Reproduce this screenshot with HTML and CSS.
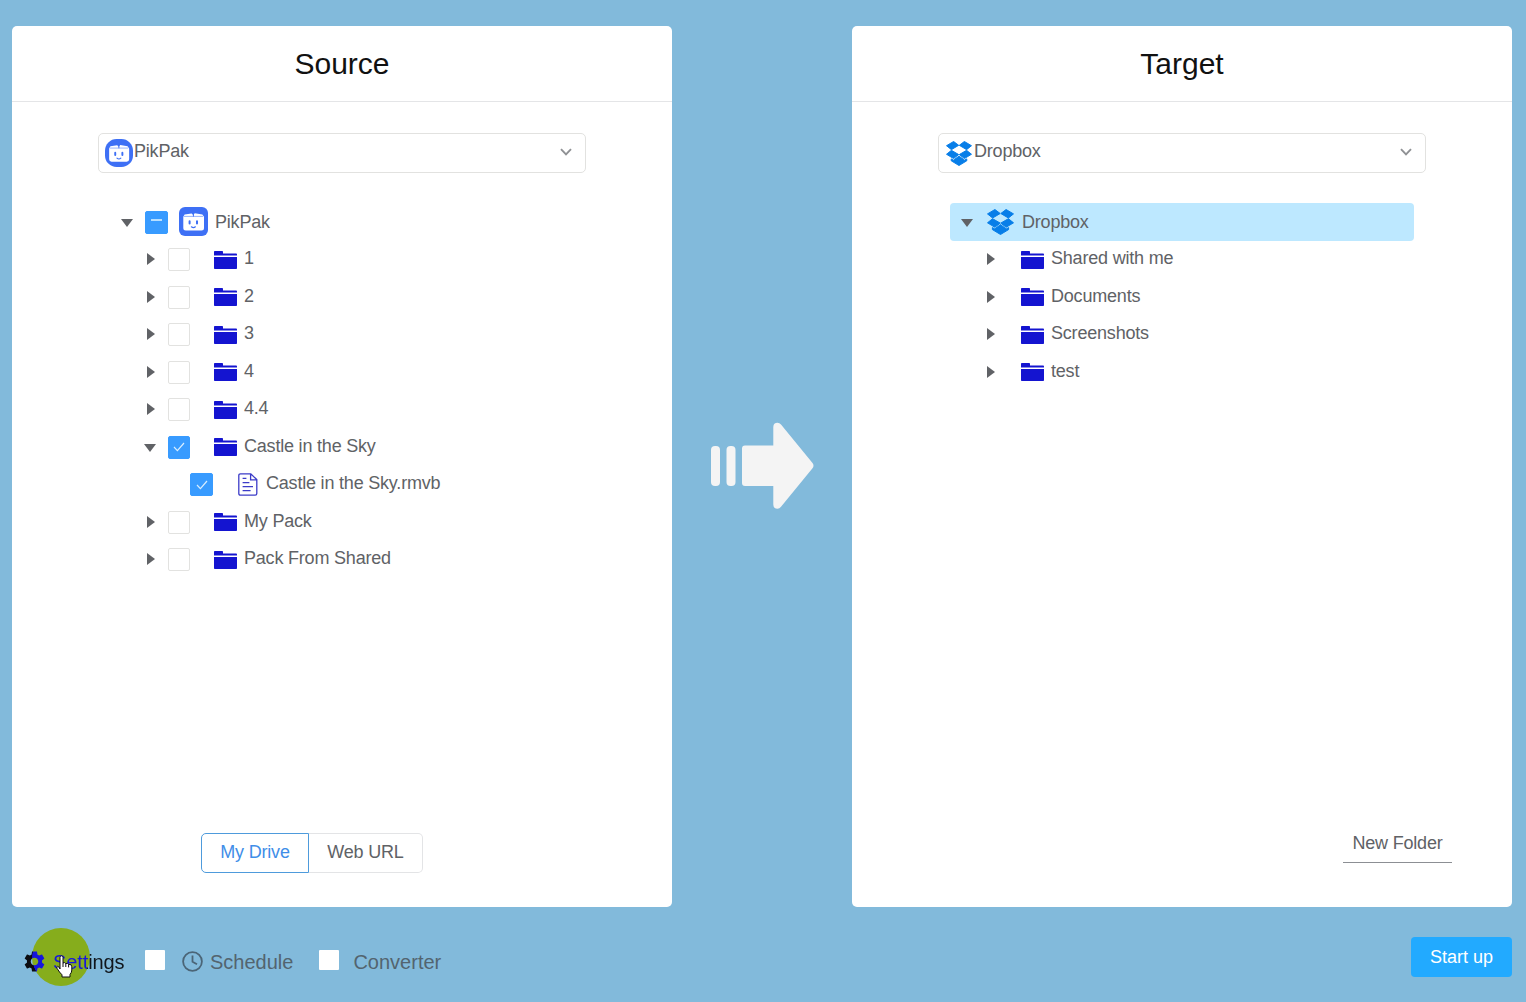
FILE: index.html
```
<!DOCTYPE html>
<html lang="en">
<head>
    <meta charset="UTF-8">
    <meta name="viewport" content="width=device-width, initial-scale=1.0">
    <title>Cloud Transfer</title>
    <link rel="stylesheet" href="styles.css">
</head>
<body>
    <svg class="sprite" width="0" height="0">
        <symbol id="folder" viewBox="0 0 23 18">
            <path d="M0 .8Q0 0 .8 0H8.2Q9 0 9 .8V2.6H22.2Q23 2.6 23 3.4V4.6H0ZM0 6H23V17.2Q23 18 22.2 18H.8Q0 18 0 17.2Z"/>
        </symbol>
        <symbol id="pikpak-face" viewBox="0 0 29 29">
            <path fill="#fff" d="M5.6 7.6 12.6 6.4 14.2 8 15.8 6.2 23.4 7.6 25 9.8V21Q25 23.5 22.5 23.5H6.8Q4.3 23.5 4.3 21V9.8Z"/>
            <path fill="none" stroke="#7d9ffa" stroke-width=".8" d="M5 9.4H24"/>
            <path fill="none" stroke="#3e70f5" stroke-width="1" d="M14.4 5.5V9.6"/>
            <path fill="none" stroke="#3e70f5" stroke-width="2" stroke-linecap="round" d="M10.6 14.2V16.6M18 14.2V16.6"/>
            <path fill="none" stroke="#3e70f5" stroke-width="1.2" stroke-linecap="round" d="M12.4 19.8Q14.4 21.6 16.4 19.8"/>
        </symbol>
        <symbol id="dropbox" viewBox="0 0 27 26">
            <path stroke="#087ee8" stroke-width="1" stroke-linejoin="round" d="M7.9 .5 13.2 4.5 5.6 9 .5 4.9ZM19.1 .5 13.8 4.5 21.4 9 26.5 4.9ZM.5 13.8 5.6 9.7 13.2 14.1 7.9 18.3ZM26.5 13.8 21.4 9.7 13.8 14.1 19.1 18.3ZM13.5 15.6 19.2 19.9 21.6 18.6V20.6L13.5 25.5 5.4 20.6V18.6L7.8 19.9Z"/>
        </symbol>
        <symbol id="chevron" viewBox="0 0 12 8">
            <path fill="none" stroke="#8f9194" stroke-width="1.9" d="M1 1.2 6 6.4 11 1.2"/>
        </symbol>
        <symbol id="check" viewBox="0 0 12 10">
            <path fill="none" stroke="#d9eeff" stroke-width="1.2" d="M1 5 4.4 8.6 11 1"/>
        </symbol>
        <radialGradient id="gear-fill" gradientUnits="userSpaceOnUse" cx="37.2" cy="7.7" r="27.6">
            <stop offset=".98" stop-color="#1616dc"/>
            <stop offset="1" stop-color="#0c0c10"/>
        </radialGradient>
    </svg>

    <main class="transfer">
        <section class="panel">
            <h1>Source</h1>
            <div class="select">
                <svg class="select-icon" viewBox="0 0 29 29"><rect width="29" height="29" rx="12" fill="#3e70f5"/><use href="#pikpak-face"/></svg>
                <span>PikPak</span>
                <svg class="chevron"><use href="#chevron"/></svg>
            </div>
            <ul class="tree">
                <li class="root"><i class="caret open"></i><i class="box partial"></i><svg class="logo" viewBox="0 0 29 29"><rect width="29" height="29" rx="6" fill="#3e70f5"/><use href="#pikpak-face"/></svg><span>PikPak</span></li>
                <li class="child"><i class="caret"></i><i class="box"></i><svg class="folder"><use href="#folder"/></svg><span>1</span></li>
                <li class="child"><i class="caret"></i><i class="box"></i><svg class="folder"><use href="#folder"/></svg><span>2</span></li>
                <li class="child"><i class="caret"></i><i class="box"></i><svg class="folder"><use href="#folder"/></svg><span>3</span></li>
                <li class="child"><i class="caret"></i><i class="box"></i><svg class="folder"><use href="#folder"/></svg><span>4</span></li>
                <li class="child"><i class="caret"></i><i class="box"></i><svg class="folder"><use href="#folder"/></svg><span>4.4</span></li>
                <li class="child"><i class="caret open"></i><i class="box checked"><svg><use href="#check"/></svg></i><svg class="folder"><use href="#folder"/></svg><span>Castle in the Sky</span></li>
                <li class="file-row"><i class="box checked"><svg><use href="#check"/></svg></i><svg class="file" viewBox="0 0 20 23"><path d="M2.4 .8H12.8L18.8 6.6V20.6Q18.8 22.2 17.2 22.2H2.4Q.8 22.2 .8 20.6V2.4Q.8 .8 2.4 .8ZM12.6 1V6.8H18.6M4.6 5.4H8.4M4.6 9.6H11.4M4.6 13.6H15M4.6 17.6H12.6"/></svg><span>Castle in the Sky.rmvb</span></li>
                <li class="child"><i class="caret"></i><i class="box"></i><svg class="folder"><use href="#folder"/></svg><span>My Pack</span></li>
                <li class="child"><i class="caret"></i><i class="box"></i><svg class="folder"><use href="#folder"/></svg><span>Pack From Shared</span></li>
            </ul>
            <div class="tabs">
                <button class="tab active">My Drive</button>
                <button class="tab">Web URL</button>
            </div>
        </section>

        <svg class="arrow" viewBox="0 0 104 88">
            <rect x="1" y="24" width="9" height="40" rx="4"/>
            <rect x="16.5" y="24" width="9" height="40" rx="4"/>
            <path d="M35 23.5H63.3V5Q63.5 .8 67.5 .8 69.5 .8 71 2.6L102.5 41Q104.5 43.7 102.5 46.3L71 84.8Q69.5 86.8 67.5 86.8 63.5 86.8 63.3 82.5V64H35Q32 64 32 61V26.5Q32 23.5 35 23.5Z"/>
        </svg>

        <section class="panel target">
            <h1>Target</h1>
            <div class="select">
                <svg class="select-icon dropbox"><use href="#dropbox"/></svg>
                <span>Dropbox</span>
                <svg class="chevron"><use href="#chevron"/></svg>
            </div>
            <ul class="tree">
                <li class="root selected"><i class="caret open"></i><svg class="logo dropbox"><use href="#dropbox"/></svg><span>Dropbox</span></li>
                <li class="child"><i class="caret"></i><svg class="folder"><use href="#folder"/></svg><span>Shared with me</span></li>
                <li class="child"><i class="caret"></i><svg class="folder"><use href="#folder"/></svg><span>Documents</span></li>
                <li class="child"><i class="caret"></i><svg class="folder"><use href="#folder"/></svg><span>Screenshots</span></li>
                <li class="child"><i class="caret"></i><svg class="folder"><use href="#folder"/></svg><span>test</span></li>
            </ul>
            <button class="new-folder">New Folder</button>
        </section>
    </main>

    <!-- click highlight sits under the settings link -->
    <div class="click-spot"></div>

    <footer>
        <a class="settings">
            <svg class="gear" viewBox="2 2 20 20"><path fill="url(#gear-fill)" d="M19.14 12.94c.04-.3.06-.61.06-.94 0-.32-.02-.64-.07-.94l2.03-1.58c.18-.14.23-.41.12-.61l-1.92-3.32c-.12-.22-.37-.29-.59-.22l-2.39.96c-.5-.38-1.03-.7-1.62-.94l-.36-2.54c-.04-.24-.24-.41-.48-.41h-3.84c-.24 0-.43.17-.47.41l-.36 2.54c-.59.24-1.13.57-1.62.94l-2.39-.96c-.22-.08-.47 0-.59.22L2.74 8.87c-.12.21-.08.47.12.61l2.03 1.58c-.05.3-.09.63-.09.94s.02.64.07.94l-2.03 1.58c-.18.14-.23.41-.12.61l1.92 3.32c.12.22.37.29.59.22l2.39-.96c.5.38 1.03.7 1.62.94l.36 2.54c.05.24.24.41.48.41h3.84c.24 0 .44-.17.47-.41l.36-2.54c.59-.24 1.13-.56 1.62-.94l2.39.96c.22.08.47 0 .59-.22l1.92-3.32c.12-.22.07-.47-.12-.61l-2.01-1.58zM12 15.6c-1.98 0-3.6-1.62-3.6-3.6s1.62-3.6 3.6-3.6 3.6 1.62 3.6 3.6-1.62 3.6-3.6 3.6z"/></svg>
            <span>Settings</span>
        </a>
        <i class="toggle"></i>
        <svg class="clock" viewBox="0 0 21 21"><circle cx="10.5" cy="10.5" r="9.4"/><path d="M10.5 4.5V10.8L15 13.3"/></svg>
        <span class="option">Schedule</span>
        <i class="toggle second"></i>
        <span class="option">Converter</span>
        <button class="start">Start up</button>
    </footer>

    <svg class="cursor" viewBox="0 0 17 23">
        <path d="M4 14V2.6Q4 .8 5.5 .8T7 2.6V8Q8.8 6.9 9.8 8.6 11.6 7.8 12.6 9.4 15.8 8.8 15.8 11.8V15Q15.8 17.5 14 19.5V22H6V19.8Q3.5 17.5 1 13.3 .4 11.5 1.6 11.3 3 11.3 4 14ZM7 8V12M9.8 8.6V12M12.6 9.4V12.4"/>
    </svg>
</body>
</html>
```
FILE: styles.css
```
* {
    box-sizing: border-box;
}
body {
    margin: 0;
    height: 1002px;
    padding: 26px 14px 0 12px;
    overflow: hidden;
    background-color: #82badb;
    color: #606266;
    font-family: "Liberation Sans", Arial, sans-serif;
    font-size: 18px;
    letter-spacing: -0.2px;
}
button {
    font: inherit;
    letter-spacing: inherit;
    color: inherit;
    background: none;
    border: none;
    padding: 0;
}
.sprite {
    display: block;
}
.transfer {
    display: flex;
    align-items: center;
    justify-content: space-between;
}
.panel {
    display: flex;
    flex-direction: column;
    width: 660px;
    height: 881px;
    background-color: #fff;
    border-radius: 5px;
}
.panel h1 {
    margin: 0;
    height: 76px;
    line-height: 75px;
    border-bottom: 1px solid #e4e5e7;
    text-align: center;
    font-size: 30px;
    font-weight: normal;
    letter-spacing: 0;
    color: #111;
}
.select {
    display: flex;
    align-items: center;
    width: 488px;
    height: 40px;
    margin: 31px auto 0 86px;
    padding: 0 13px 2px 6px;
    border: 1px solid #e2e2e0;
    border-radius: 5px;
}
.select span {
    margin-bottom: 1px;
}
.select-icon {
    width: 28px;
    height: 28px;
    margin-right: 1px;
    position: relative;
    top: 1px;
}
.select .dropbox {
    width: 26px;
    height: 25px;
    margin: 0 2px 0 1px;
}
.chevron {
    width: 12px;
    height: 8px;
    margin-left: auto;
}
.dropbox {
    fill: #087ee8;
}
.tree {
    list-style: none;
    width: 464px;
    margin: 30px 0 0 98px;
    padding: 0;
}
.tree li {
    display: flex;
    align-items: center;
    height: 37.5px;
    border-radius: 4px;
}
.tree .root {
    padding-left: 6px;
}
.tree .root span {
    margin-top: 1px;
}
.tree .child {
    padding-left: 29px;
}
.tree .child span, .tree .file-row span {
    margin-bottom: 1px;
}
.tree .file-row {
    padding-left: 80px;
}
.tree .selected {
    background-color: #bde8ff;
}
.caret {
    display: flex;
    justify-content: center;
    width: 22px;
    margin-right: 7px;
}
.caret::before {
    content: "";
    border-left: 8px solid #606266;
    border-top: 6.5px solid transparent;
    border-bottom: 6.5px solid transparent;
    margin-left: 2px;
}
.caret.open::before {
    border-left: 6.5px solid transparent;
    border-right: 6.5px solid transparent;
    border-top: 8px solid #606266;
    border-bottom: none;
    margin: 2px 0 0;
}
.box {
    display: flex;
    align-items: center;
    justify-content: center;
    width: 22px;
    height: 23px;
    margin-top: 0.5px;
    border: 1px solid #e2e2e0;
    border-radius: 2px;
}
.box.checked, .box.partial {
    background-color: #389bff;
    border-color: #389bff;
}
.box.partial, .file-row .box {
    width: 23px;
}
.box.checked svg {
    width: 12px;
    height: 10px;
}
.box.partial::before {
    content: "";
    width: 11px;
    height: 2px;
    margin-bottom: 5px;
    background-color: #b8dfff;
}
.logo {
    width: 29px;
    height: 29px;
    margin: 0 7px 0 11px;
}
.folder {
    width: 23px;
    height: 18px;
    margin: 1px 7px 0 24px;
    fill: #1414d0;
}
.file {
    width: 20px;
    height: 23px;
    margin: 1px 8px 0 25px;
    fill: none;
    stroke: #3c3cc8;
    stroke-width: 1.3;
}
.target .logo {
    width: 27px;
    height: 26px;
    margin: 0 8px 0 2px;
}
.target .child {
    padding-left: 30px;
}
.target .child .caret::before {
    margin-left: 0;
}
.target .folder {
    margin-left: 12px;
}
.tabs {
    display: flex;
    margin: auto 0 34px 189px;
}
.tab {
    width: 114px;
    height: 40px;
    padding-bottom: 2px;
    border: 1px solid #e3e4e6;
    border-left: none;
    border-radius: 0 5px 5px 0;
}
.tab.active {
    width: 108px;
    border: 1px solid #4e9bdc;
    border-radius: 5px 0 0 5px;
    color: #3f8ee8;
}
.new-folder {
    width: 109px;
    height: 38px;
    margin: auto 60px 44px auto;
    border-bottom: 1px solid #8c8f94;
}
.arrow {
    width: 104px;
    height: 88px;
    margin: -2px 0 0;
    fill: #f4f4f4;
}
footer {
    display: flex;
    align-items: center;
    height: 40px;
    margin: 30px 0 0 12px;
    font-size: 20px;
    letter-spacing: 0;
}
.settings {
    display: flex;
    align-items: center;
    position: relative;
    width: 121px;
    padding-top: 9px;
}
.settings span {
    padding-top: 2px;
    letter-spacing: -0.1px;
    background-image: radial-gradient(circle 29px at 8px 7px, #1616dc 98%, #10161c);
    -webkit-background-clip: text;
    background-clip: text;
    color: transparent;
}
.gear {
    width: 21px;
    height: 21px;
    margin-right: 8px;
}
.toggle {
    width: 20px;
    height: 20px;
    margin-top: 6px;
    border-radius: 1px;
    background-color: #fff;
}
.clock {
    width: 21px;
    height: 21px;
    margin: 8px 7px 0 17px;
    fill: none;
    stroke: #4b6577;
    stroke-width: 1.8;
}
.option {
    padding-top: 11px;
    color: #53646f;
}
.toggle.second {
    margin-left: 26px;
    margin-right: 14px;
}
.start {
    width: 101px;
    height: 40px;
    margin-left: auto;
    border-radius: 4px;
    background-color: #22aaff;
    color: #fff;
    font-size: 18px;
}
.click-spot {
    position: absolute;
    left: 32px;
    top: 928px;
    width: 58px;
    height: 58px;
    border-radius: 50%;
    background-color: #86ad1c;
}
.cursor {
    position: absolute;
    left: 56px;
    top: 955px;
    width: 17px;
    height: 23px;
    fill: #fff;
    stroke: #111;
    stroke-width: 1;
}
```
